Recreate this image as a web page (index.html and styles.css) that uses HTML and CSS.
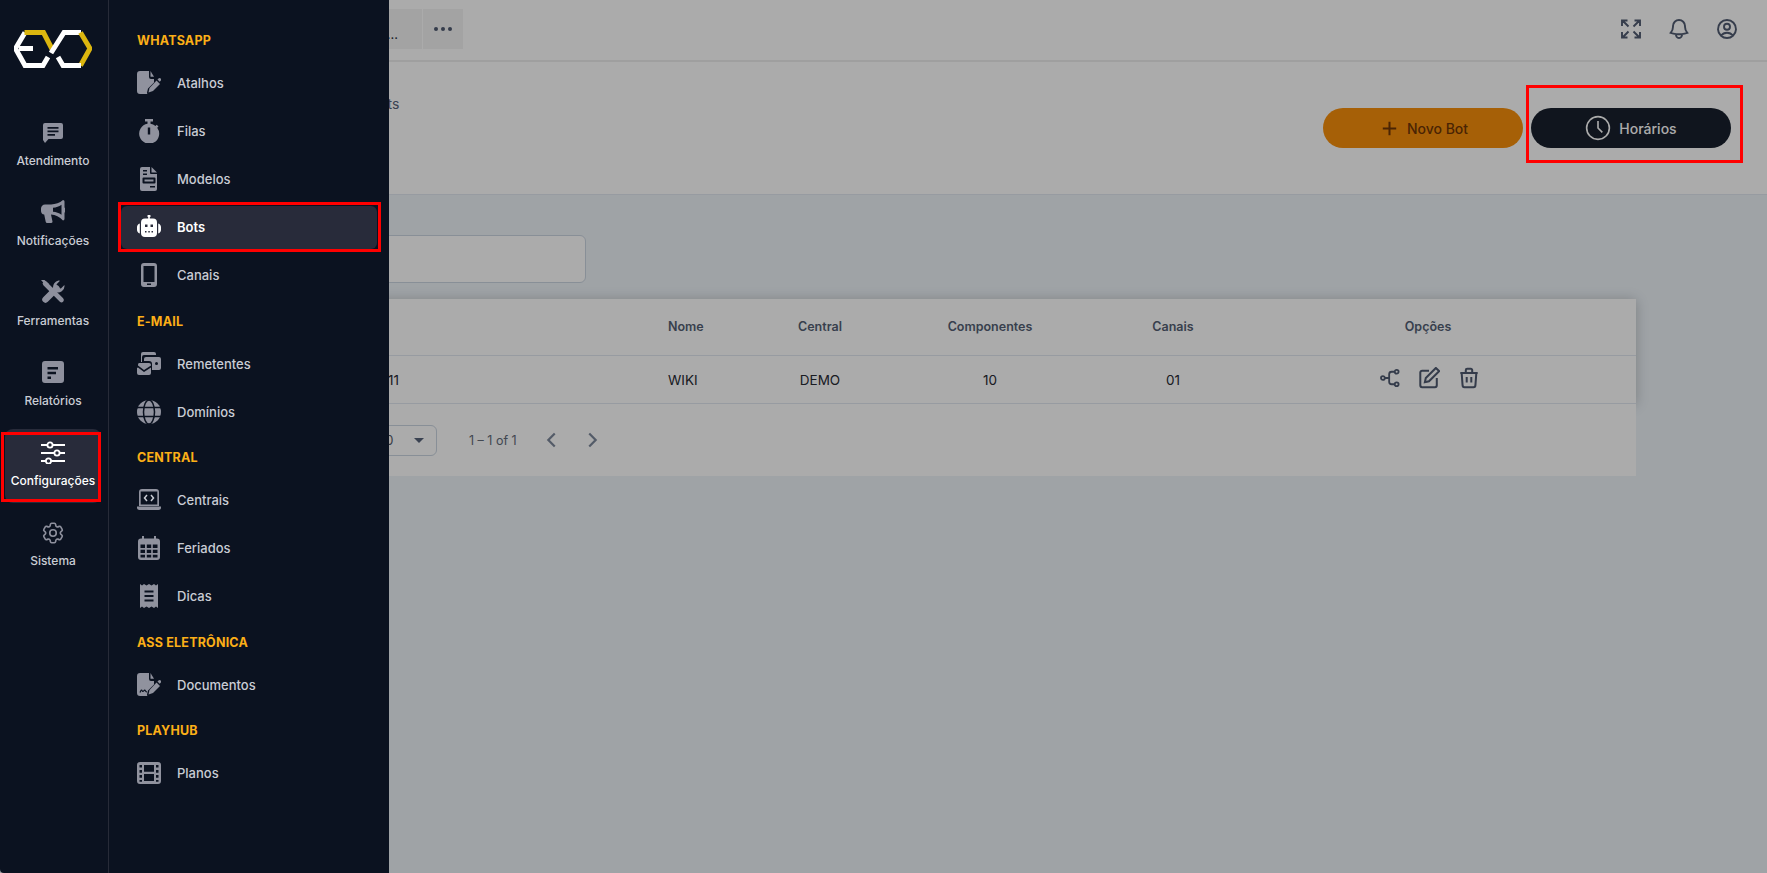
FILE: index.html
```html
<!DOCTYPE html>
<html lang="pt-BR">
<head>
<meta charset="utf-8">
<title>Bots</title>
<link rel="stylesheet" href="styles.css">
</head>
<body>
<div class="app">
  <nav class="rail">
    <div class="logo">
      <svg width="78" height="38" viewBox="0 0 78 38" fill="none" stroke-width="5" stroke-linejoin="miter">
        <path stroke="#fff" d="M11 2.500 1.500 18.500 11 35.500H29L34 27" />
        <path stroke="#fff" d="M5 18.500H19" />
        <path stroke="#dcb60f" d="M10.500 2.500H29.500L38 19" />
        <path stroke="#fff" d="M37 23 50 2.500H67" />
        <path stroke="#dcb60f" d="M66.500 2.500 76 18.500 66.500 35.500" />
        <path stroke="#fff" d="M67 35.500H49L44 27" />
      </svg>
    </div>
    <a class="rail-item">
      <svg class="ri" viewBox="0 0 24 24"><path fill-rule="evenodd" d="M4 3h16a2 2 0 0 1 2 2v12a2 2 0 0 1-2 2H7.500L4 23l-2-3V5a2 2 0 0 1 2-2zm2.500 4v1.800h11V7zm0 3.500v1.800h11v-1.800zm0 3.500v1.800h7.500V14z"/></svg>
      <span>Atendimento</span>
    </a>
    <a class="rail-item">
      <svg class="ri" viewBox="0 0 24 24"><path fill-rule="evenodd" d="M22 0a1.600 1.600 0 0 1 1.500 1.600v6a2.800 2.800 0 0 1 0 5v6.200A1.600 1.600 0 0 1 22 20.400c-3.500-3.300-7.500-5.400-12-5.800l1.400 6.500a1.600 1.600 0 0 1-1.500 2H6.200a1.600 1.600 0 0 1-1.500-1.300L3.200 14.600C1.300 14.300 0 12.900 0 11V8.500C0 6.200 1.800 4.500 4 4.500h6c4.600-.4 8.600-1.500 12-4.500zM20.500 4.800c-2.500 1.800-5.300 2.700-8.500 3v4c3.200.3 6 1.300 8.500 3z"/></svg>
      <span>Notificações</span>
    </a>
    <a class="rail-item">
      <svg class="ri" viewBox="0 0 24 24"><path d="M4 3.500 20.500 20" fill="none" stroke="#8e909d" stroke-width="4.600" stroke-linecap="round"/><path d="M0 0h3.500L8 4v3.500L3.500 4z"/><path d="M4.500 19.500 15.500 8.500" fill="none" stroke="#8e909d" stroke-width="6.500" stroke-linecap="round"/><path d="M17.500 .5a6.500 6.500 0 0 1 1.500.2l-3.400 3.500.8 3.500 3.500.8L23.400 5a6.500 6.500 0 0 1-9.400 6.800L12.200 8A6.500 6.500 0 0 1 17.500 .5z"/></svg>
      <span>Ferramentas</span>
    </a>
    <a class="rail-item">
      <svg class="ri" viewBox="0 0 24 24"><path fill-rule="evenodd" d="M4 1h16a3 3 0 0 1 3 3v16a3 3 0 0 1-3 3H4a3 3 0 0 1-3-3V4a3 3 0 0 1 3-3zm2.500 6v2.500H17V7zm0 4.800v2.500h8.500v-2.500zm0 4.700V19H10v-2.500z"/></svg>
      <span>Relatórios</span>
    </a>
    <a class="rail-item is-active">
      <svg class="ri" viewBox="0 0 24 24"><path d="M0 5h24M0 13h24M0 21h24" stroke="#fff" stroke-width="2" /><circle cx="9" cy="5" r="2.600" fill="#282b3a" stroke="#fff" stroke-width="1.800"/><circle cx="16" cy="13" r="2.600" fill="#282b3a" stroke="#fff" stroke-width="1.800"/><circle cx="7.500" cy="21" r="2.600" fill="#282b3a" stroke="#fff" stroke-width="1.800"/></svg>
      <span>Configurações</span>
      <i class="mark mark-rail"></i>
    </a>
    <a class="rail-item">
      <svg class="ri gear" viewBox="0 0 24 24"><path d="M9.594 3.940c.09-.542.56-.94 1.110-.94h2.593c.55 0 1.020.398 1.110.94l.213 1.281c.063.374.313.686.645.87.074.04.147.083.22.127.324.196.72.257 1.075.124l1.217-.456a1.125 1.125 0 011.370.49l1.296 2.247a1.125 1.125 0 01-.26 1.431l-1.003.827c-.293.24-.438.613-.431.992a6.759 6.759 0 010 .255c-.007.378.138.75.43.99l1.005.828c.424.35.534.954.26 1.430l-1.298 2.247a1.125 1.125 0 01-1.369.491l-1.217-.456c-.355-.133-.75-.072-1.076.124a6.570 6.570 0 01-.22.128c-.331.183-.581.495-.644.869l-.213 1.280c-.09.543-.56.941-1.110.941h-2.594c-.55 0-1.020-.398-1.110-.94l-.213-1.281c-.062-.374-.312-.686-.644-.87a6.520 6.520 0 01-.22-.127c-.325-.196-.72-.257-1.076-.124l-1.217.456a1.125 1.125 0 01-1.369-.49l-1.297-2.247a1.125 1.125 0 01.26-1.431l1.004-.827c.292-.24.437-.613.43-.992a6.932 6.932 0 010-.255c.007-.378-.138-.75-.43-.99l-1.004-.828a1.125 1.125 0 01-.26-1.430l1.297-2.247a1.125 1.125 0 011.370-.491l1.216.456c.356.133.751.072 1.076-.124.072-.044.146-.087.22-.128.332-.183.582-.495.644-.869l.214-1.281z"/><path d="M15 12a3 3 0 11-6 0 3 3 0 016 0z"/></svg>
      <span>Sistema</span>
    </a>
  </nav>

  <aside class="panel">
    <section class="group">
      <h3 class="group-title">WHATSAPP</h3>
      <a class="menu-item"><svg class="mi" viewBox="0 0 24 24"><path d="M3 0h9v6a2 2 0 0 0 2 2h3v3.500l-6 6-1 4 .3 1.500H3a3 3 0 0 1-3-3V3a3 3 0 0 1 3-3z"/><path d="M13.500 0 17 5.800h-3.500z"/><path d="M19.500 9.500 23 13l-7 7-4.500 1.500 1-4.500z"/><path d="M20.500 8.500l1-1a1.500 1.500 0 0 1 2.200 2.200l-1 1z"/></svg><span>Atalhos</span></a>
      <a class="menu-item"><svg class="mi" viewBox="0 0 24 24"><path fill-rule="evenodd" d="M8 0h8v2.500h-2.500v2.300a10 10 0 0 1 5 2.200l1.200-1.300 1.800 1.800-1.300 1.200A10 10 0 1 1 10.500 4.800V2.500H8zm2.800 8.500v7h2.400v-7z"/></svg><span>Filas</span></a>
      <a class="menu-item"><svg class="mi" viewBox="0 0 24 24"><path fill-rule="evenodd" d="M5 0h8v6a1 1 0 0 0 1 1h6v15a2 2 0 0 1-2 2H5a2 2 0 0 1-2-2V2a2 2 0 0 1 2-2zm1 3v1.500h4V3zm0 3.500V8h4V6.500zm.5 4a1 1 0 0 0-1 1v4a1 1 0 0 0 1 1h11a1 1 0 0 0 1-1v-4a1 1 0 0 0-1-1zm1 2h9v2h-9zM13 19v1.500h5V19z"/><path d="M14.500 0 20 5.500h-5.500z"/></svg><span>Modelos</span></a>
      <a class="menu-item is-active"><svg class="mi" viewBox="0 0 24 24"><path fill-rule="evenodd" d="M11.200 3.500V2.300a1.500 1.500 0 1 1 1.600 0v1.200H16a4 4 0 0 1 4 4V18a4 4 0 0 1-4 4H8a4 4 0 0 1-4-4V7.500a4 4 0 0 1 4-4zM8 9.500v2.500h2.500V9.500zm5.500 0v2.500H16V9.500zM8 16v1.500h1.500V16zm3.300 0v1.500h1.500V16zm3.200 0v1.500H16V16z"/><path d="M2.800 8.500v10C1 18 0 16.500 0 14.800v-2.600C0 10.500 1 9 2.800 8.500zM21.200 8.500c1.800.5 2.800 2 2.800 3.700v2.600c0 1.700-1 3.200-2.800 3.700z"/></svg><span>Bots</span><i class="mark mark-bots"></i></a>
      <a class="menu-item"><svg class="mi" viewBox="0 0 24 24"><path fill-rule="evenodd" d="M7 0h10a3 3 0 0 1 3 3v18a3 3 0 0 1-3 3H7a3 3 0 0 1-3-3V3a3 3 0 0 1 3-3zm-.5 3v16h11V3zM10 20.500V22h4v-1.500z"/></svg><span>Canais</span></a>
    </section>
    <section class="group">
      <h3 class="group-title">E-MAIL</h3>
      <a class="menu-item"><svg class="mi" viewBox="0 0 24 24"><path d="M4 0h11a2 2 0 0 1 2 2v1H5a2 2 0 0 0-2 2v5H2V2a2 2 0 0 1 2-2z" transform="translate(2 0)"/><path fill-rule="evenodd" d="M9 5h13a2 2 0 0 1 2 2v9a2 2 0 0 1-2 2h-7v-6a3 3 0 0 0-3-3H7V7a2 2 0 0 1 2-2zm10.500 5a1.500 1.500 0 1 0 0 3 1.500 1.500 0 0 0 0-3z"/><path d="M2 11h10a2 2 0 0 1 2 2v.5L7 18 1 13.500V13a2 2 0 0 1 1-2z"/><path d="M1 15.500 7 20l7-4.500V21a2 2 0 0 1-2 2H2a2 2 0 0 1-2-2v-5z"/></svg><span>Remetentes</span></a>
      <a class="menu-item"><svg class="mi" viewBox="0 0 24 24"><circle cx="12" cy="12" r="12"/><g fill="none" stroke="#0b1220" stroke-width="1.500"><ellipse cx="12" cy="12" rx="5.500" ry="12"/><path d="M0 7.500h24M0 16.500h24"/></g></svg><span>Domínios</span></a>
      </section>
    <section class="group">
      <h3 class="group-title">CENTRAL</h3>
      <a class="menu-item"><svg class="mi" viewBox="0 0 24 24"><path fill-rule="evenodd" d="M5 1h14a3 3 0 0 1 3 3v14H2V4a3 3 0 0 1 3-3zm-1.300 2.500V16.500h16.600V3.500z"/><path d="M0 18.500h24v1a2.500 2.500 0 0 1-2.500 2.500h-19A2.500 2.500 0 0 1 0 19.500z"/><path d="M10 7 7.500 10l2.500 3M14 7l2.500 3-2.500 3" fill="none" stroke="#c9ccd4" stroke-width="1.500"/></svg><span>Centrais</span></a>
      <a class="menu-item"><svg class="mi" viewBox="0 0 24 24"><path fill-rule="evenodd" d="M5 0h2v2.500h10V0h2v2.500h1a3 3 0 0 1 3 3V21a3 3 0 0 1-3 3H4a3 3 0 0 1-3-3V5.500a3 3 0 0 1 3-3h1zM3.500 8.500V12H8V8.500zm6.300 0V12h4.400V8.500zm6 0V12h4.700V8.500zm-12.300 5.300V17H8v-3.200zm6.300 0V17h4.400v-3.200zm6 0V17h4.700v-3.200zM3.500 18.800V21.500H8v-2.700zm6.300 0v2.700h4.400v-2.700zm6 0v2.700h4.700v-2.700z"/></svg><span>Feriados</span></a>
      <a class="menu-item"><svg class="mi" viewBox="0 0 24 24"><path fill-rule="evenodd" d="M3 0l2 1.500L7 0l2.500 1.500L12 0l2.500 1.500L17 0l2 1.500L21 0v24l-2-1.500-2 1.500-2.500-1.500L12 24l-2.500-1.500L7 24l-2-1.500L3 24zm4.500 6.500v2h9v-2zm0 4.500v2h9v-2zm0 4.500v2h9v-2z"/></svg><span>Dicas</span></a>
    </section>
    <section class="group">
      <h3 class="group-title">ASS ELETRÔNICA</h3>
      <a class="menu-item"><svg class="mi" viewBox="0 0 24 24"><path fill-rule="evenodd" d="M3 0h9v6a2 2 0 0 0 2 2h3v3.500l-6 6-1 4 .3 1.500H3a3 3 0 0 1-3-3V3a3 3 0 0 1 3-3z"/><path d="M13.500 0 17 5.800h-3.500z"/><path d="M19.500 9.500 23 13l-7 7-4.500 1.500 1-4.500z"/><path d="M20.500 8.500l1-1a1.500 1.500 0 0 1 2.200 2.200l-1 1z"/><path d="M3 19.500c1-2.500 1.500-3 2-2s1 1.500 2 0 1.500 1.500 3 1.500" fill="none" stroke="#0b1220" stroke-width="1.200"/></svg><span>Documentos</span></a>
    </section>
    <section class="group">
      <h3 class="group-title">PLAYHUB</h3>
      <a class="menu-item"><svg class="mi" viewBox="0 0 24 24"><path fill-rule="evenodd" d="M3 1h18a3 3 0 0 1 3 3v16a3 3 0 0 1-3 3H3a3 3 0 0 1-3-3V4a3 3 0 0 1 3-3zm-.5 3v2.500H5V4zm0 5v2.700H5V9zm0 5v2.700H5V14zm0 5v1.800H5V19zM19 4v2.500h2.500V4zm0 5v2.700h2.500V9zm0 5v2.700h2.500V14zm0 5v1.800h2.500V19zM7 4v6.700h10V4zm0 9v7h10v-7z"/></svg><span>Planos</span></a>
    </section>
  </aside>

  <main class="main">
    <header class="topbar">
      <div class="tabs">
        <div class="tab tab-name">Bot...</div>
        <div class="tab tab-more"><i></i><i></i><i></i></div>
      </div>
      <div class="top-icons">
        <svg class="ti" viewBox="0 0 24 24"><path d="M3 9V3.500h5.500M3.500 3.500 9.500 9.500M21 9V3.500h-5.500M20.500 3.500l-6 6M3 15v5.500h5.500M3.500 20.500l6-6M21 15v5.500h-5.500M20.500 20.500l-6-6"/></svg>
        <svg class="ti" viewBox="0 0 24 24"><path d="M14.857 17.082a23.848 23.848 0 005.454-1.310A8.967 8.967 0 0118 9.750v-.7V9A6 6 0 006 9v.75a8.967 8.967 0 01-2.312 6.022c1.733.64 3.560 1.085 5.455 1.310m5.714 0a24.255 24.255 0 01-5.714 0m5.714 0a3 3 0 11-5.714 0"/></svg>
        <svg class="ti" viewBox="0 0 24 24"><path d="M17.982 18.725A7.488 7.488 0 0012 15.750a7.488 7.488 0 00-5.982 2.975m11.963 0a9 9 0 10-11.963 0m11.963 0A8.966 8.966 0 0112 21a8.966 8.966 0 01-5.982-2.275M15 9.750a3 3 0 11-6 0 3 3 0 016 0z"/></svg>
      </div>
    </header>

    <section class="page-head">
      <div class="crumb">Bots</div>
      <div class="actions">
        <button class="btn btn-new"><svg class="bi" viewBox="0 0 24 24"><path d="M12 5v14M5 12h14"/></svg>Novo Bot</button>
        <button class="btn btn-hours"><svg class="bi bi-clock" viewBox="0 0 24 24"><circle cx="12" cy="12" r="10.500"/><path d="M12 5.500V12l4 4"/></svg>Horários<i class="mark mark-hours"></i></button>
      </div>
    </section>

    <section class="content">
      <div class="search"></div>
      <div class="card">
        <div class="table">
          <div class="row row-head">
            <div></div><div>Nome</div><div class="c">Central</div><div class="c">Componentes</div><div class="c">Canais</div><div class="c">Opções</div>
          </div>
          <div class="row row-body">
            <div class="cell-id">11</div><div>WIKI</div><div class="c">DEMO</div><div class="c">10</div><div class="c">01</div>
            <div class="opts">
              <svg class="oi" viewBox="0 0 24 24"><circle cx="3.500" cy="12" r="2.300"/><circle cx="20" cy="4.500" r="2.300"/><circle cx="20" cy="19.500" r="2.300"/><path d="M6 12h5M17.500 4.500H14a3 3 0 0 0-3 3v9a3 3 0 0 0 3 3h3.500"/></svg>
              <svg class="oi oi-edit" viewBox="0 0 24 24"><path d="M12 4H4.500A2 2 0 0 0 2.500 6v14a2 2 0 0 0 2 2h14a2 2 0 0 0 2-2v-8"/><path d="M19.500 1 23 4.500 12 15.500l-4.500 1 1-4.500z"/></svg>
              <svg class="oi oi-trash" viewBox="0 0 24 24"><path d="M2.500 6.500h19M9.500 11v6M14.500 11v6M4 6.500l1 13.500a2 2 0 0 0 2 2h10a2 2 0 0 0 2-2l1-13.500M8.500 6.500V3.500a1.500 1.500 0 0 1 1.500-1.500h4a1.500 1.500 0 0 1 1.500 1.500v3"/></svg>
            </div>
          </div>
        </div>
        <div class="pager">
          <div class="select"><span>10</span><i class="caret"></i></div>
          <span class="range">1 – 1 of 1</span>
          <div class="chevrons">
            <svg class="ci" viewBox="0 0 24 24"><path d="M15 5l-7 7 7 7"/></svg>
            <svg class="ci" viewBox="0 0 24 24"><path d="M9 5l7 7-7 7"/></svg>
          </div>
        </div>
      </div>
    </section>
    <div class="scrim"></div>
  </main>
</div>
</body>
</html>
```

FILE: styles.css
```css
* { box-sizing: border-box; }
html, body { margin: 0; height: 100%; overflow: hidden; }
body { font-family: Inter, "Noto Sans", sans-serif; background: #9fa3a6; }
.app { display: flex; height: 873px; position: relative; }

.rail {
  width: 109px; flex: none; background: #0b1220; border-right: 1px solid #272b38;
  display: flex; flex-direction: column; align-items: center; gap: 6px; padding-right: 2px;
  position: relative; z-index: 3; border-bottom-left-radius: 4px;
}
.logo { height: 103px; width: 100%; padding: 30px 0 0 14px; }
.logo svg { display: block; }
.rail-item {
  position: relative; width: 96px; height: 74px; border-radius: 8px;
  display: flex; flex-direction: column; align-items: center; padding-top: 11px;
  color: #c9ccd4; font-size: 12px; font-weight: 500; white-space: nowrap;
}
.rail-item span { margin-top: 9px; line-height: 16px; }
.rail-item.is-active { background: #282b3a; color: #fff; }
.ri { width: 24px; height: 24px; fill: #8e909d; display: block; }
.gear { fill: none; stroke: #8e909d; stroke-width: 1.500; width: 26px; height: 26px; margin: 0 0 -2px; }

.panel {
  position: absolute; left: 109px; top: 0; bottom: 0; width: 280px; z-index: 3;
  background: #0b1220; padding: 31px 12px 0; display: flex; flex-direction: column; gap: 15px;
}
.group { display: flex; flex-direction: column; gap: 5px; }
.group-title {
  margin: 0 0 5.500px 16px; font-size: 12.500px; line-height: 20px; font-weight: 700;
  letter-spacing: .2px; color: #fcaf17;
}
.menu-item {
  position: relative; height: 43px; border-radius: 6px; display: flex; align-items: center;
  gap: 16px; padding-left: 16px; color: #c9ccd4; font-size: 13px; font-weight: 500;
}
.menu-item.is-active { background: #282b3a; color: #fff; font-weight: 600; }
.mi { width: 24px; height: 24px; fill: #90929e; flex: none; }
.menu-item.is-active .mi { fill: #fff; }

.mark { position: absolute; border: 3px solid #f00; z-index: 4; pointer-events: none; }
.mark-rail { left: -4px; right: 0; top: 3px; bottom: 1px; }
.mark-bots { left: -3px; right: -4px; top: -4px; bottom: -3px; }
.mark-hours { left: -5px; right: -12px; top: -23px; bottom: -15px; }

.main { flex: 1; min-width: 0; position: relative; display: flex; flex-direction: column; }
.scrim { position: absolute; inset: 0; background: rgba(0, 0, 0, .33); z-index: 1; }

.topbar {
  height: 62px; flex: none; background: #fff; border-bottom: 2px solid #ededed;
  display: flex; align-items: center; justify-content: space-between;
  padding: 0 28px 2px 0;
}
.tabs { display: flex; gap: 1px; margin-left: 193px; height: 40px; }
.tab { background: #f3f3f4; height: 40px; display: flex; align-items: center; justify-content: center; color: #2a3240; font-size: 13px; }
.tab-name { width: 120px; justify-content: flex-end; padding: 10px 24px 0 0; }
.tab-more { width: 40px; gap: 3px; }
.tab-more i { width: 4px; height: 4px; border-radius: 50%; background: #4f5a70; }
.top-icons { display: flex; gap: 24px; }
.ti { width: 24px; height: 24px; fill: none; stroke: #515c72; stroke-width: 1.900; }

.page-head {
  height: 133px; flex: none; background: #fff; border-bottom: 1px solid #e2e8f0;
  position: relative; display: flex; justify-content: space-between; align-items: flex-start;
  padding: 33px 36px 0 261px;
}
.crumb { color: #57637a; font-size: 14px; line-height: 18px; }
.actions { display: flex; gap: 8px; margin-top: 13px; }
.btn {
  width: 200px; height: 40px; border: 0; border-radius: 20px; font: 500 14px Inter, sans-serif;
  display: flex; align-items: center; justify-content: center; gap: 8px; position: relative;
}
.btn-new { background: #f8900b; color: #6f3606; gap: 6px; }
.btn-hours { background: #18202d; color: #fff; }
.bi { width: 23px; height: 23px; fill: none; stroke: #6f3606; stroke-width: 2.100; }
.bi-clock { width: 26px; height: 26px; stroke: #fff; stroke-width: 1.500; }

.content { flex: 1; padding: 40px 131px 0; background: #edf3f8; }
.search { width: 346px; height: 48px; background: #fff; border: 1px solid #cbd5e1; border-radius: 6px; }
.card { margin-top: 16px; background: #fff; }
.table { box-shadow: 0 1px 12px rgba(0, 0, 0, .22); }
.row { display: grid; grid-template-columns: 428px 118px 68px 272px 94px 416px; align-items: center; font-size: 13.500px; }
.row-head { height: 57px; border-bottom: 1px solid #e2e8f0; color: #545f74; font-size: 12.500px; font-weight: 600; padding-bottom: 1px; }
.row-body { height: 48px; border-bottom: 1px solid #e2e8f0; color: #272a33; }
.c { text-align: center; }
.cell-id { padding-left: 148px; }
.opts { display: flex; justify-content: center; align-items: center; gap: 18px; padding: 0 0 4px 3px; }
.oi { width: 20px; height: 20px; fill: none; stroke: #4f5a70; stroke-width: 2.200; }
.oi-edit { width: 22px; height: 22px; }
.oi-trash { width: 22px; height: 22px; }
.pager {
  height: 72px; display: flex; align-items: center; padding-left: 117px; color: #636b79; font-size: 12.500px;
  background: #fff; position: relative;
}
.select {
  width: 80px; height: 31px; border: 1px solid #cbd5e1; border-radius: 6px;
  display: flex; align-items: center; justify-content: space-between; padding: 0 12px 0 22px; color: #555c6a; font-size: 13px;
}
.caret { width: 0; height: 0; border: 5px solid transparent; border-top: 5px solid #57637a; border-bottom: 0; }
.range { margin-left: 32px; width: 47px; white-space: nowrap; }
.chevrons { display: flex; gap: 18px; margin-left: 25px; }
.ci { width: 22px; height: 22px; fill: none; stroke: #7d889b; stroke-width: 2.400; }
```
